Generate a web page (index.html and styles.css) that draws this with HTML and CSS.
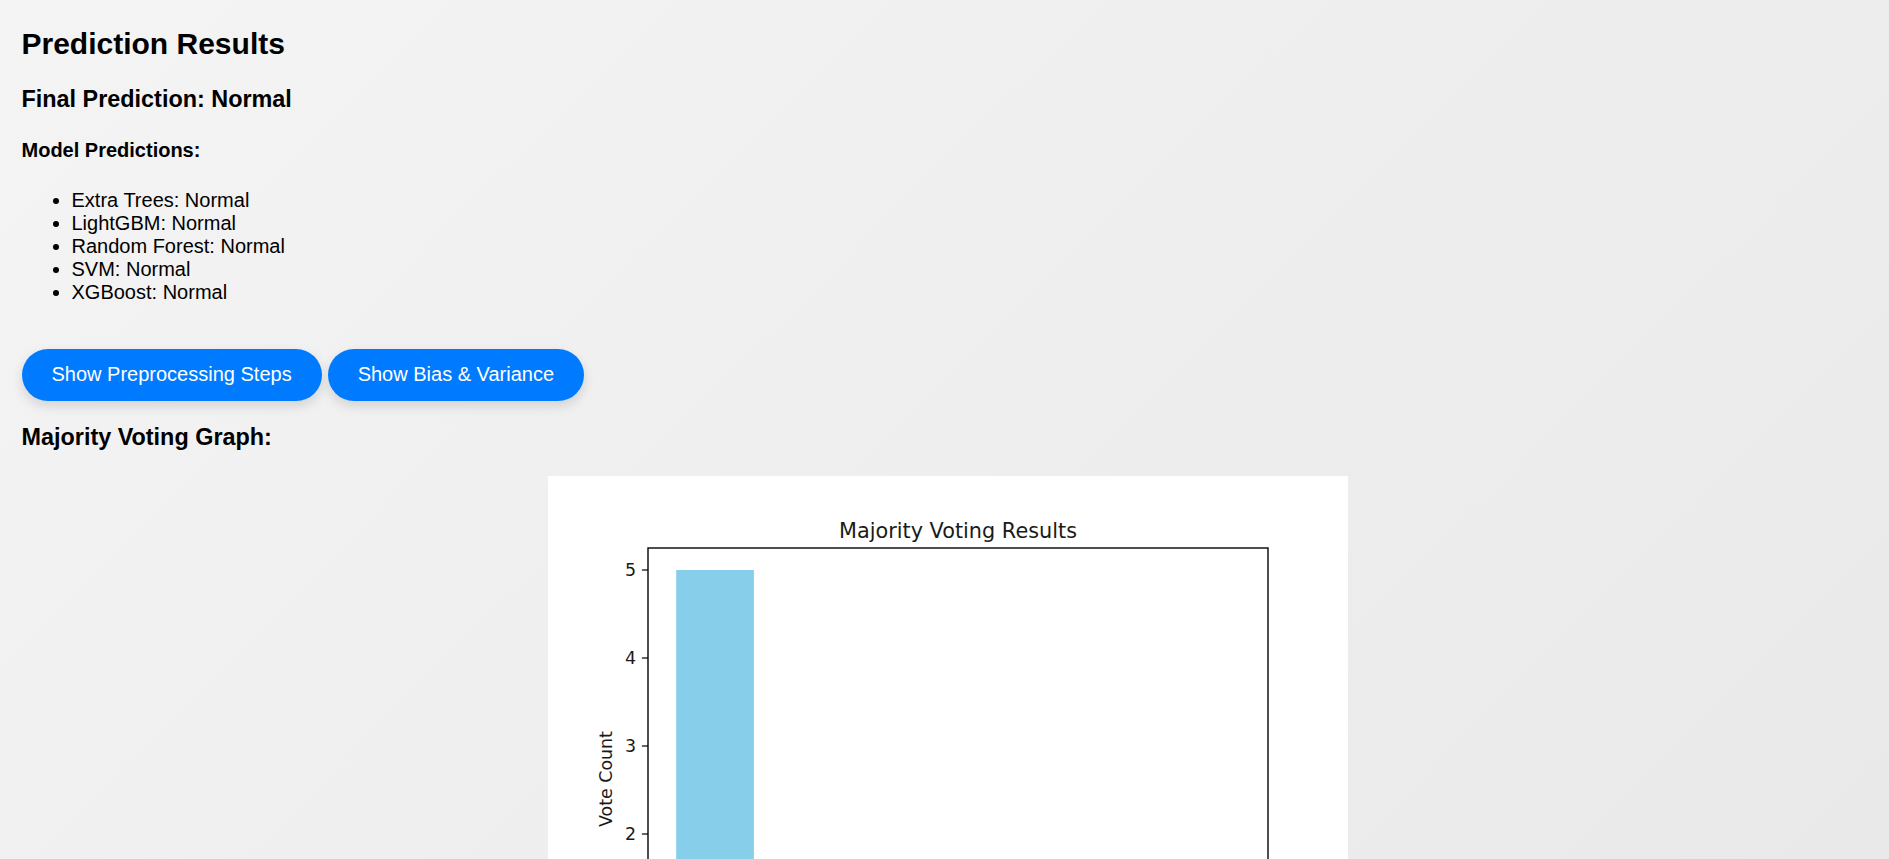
FILE: index.html
```html
<!DOCTYPE html>
<html lang="en">
<head>
<meta charset="utf-8">
<title>Prediction Results</title>
<link rel="stylesheet" href="styles.css">
</head>
<body>
<main class="page">
  <h2 class="title">Prediction Results</h2>
  <h3 class="final">Final Prediction: Normal</h3>
  <h4 class="sub">Model Predictions:</h4>
  <ul class="models">
    <li>Extra Trees: Normal</li>
    <li>LightGBM: Normal</li>
    <li>Random Forest: Normal</li>
    <li>SVM: Normal</li>
    <li>XGBoost: Normal</li>
  </ul>
  <div class="actions">
    <button class="btn" type="button">Show Preprocessing Steps</button>
    <button class="btn" type="button">Show Bias &amp; Variance</button>
  </div>
  <h3 class="graph-title">Majority Voting Graph:</h3>
  <div class="graph">
    <svg class="chart" width="800" height="600" viewBox="0 0 800 600" xmlns="http://www.w3.org/2000/svg">
      <rect x="0" y="0" width="800" height="600" fill="#ffffff"/>
      <rect x="128.2" y="94" width="77.7" height="440" fill="#87ceeb"/>
      <rect x="100" y="72" width="620" height="462" fill="none" stroke="#000" stroke-width="1.39"/>
      <g stroke="#000" stroke-width="1.2">
        <line x1="100" y1="94" x2="93.9" y2="94"/>
        <line x1="100" y1="182" x2="93.9" y2="182"/>
        <line x1="100" y1="270" x2="93.9" y2="270"/>
        <line x1="100" y1="358" x2="93.9" y2="358"/>
        <line x1="100" y1="446" x2="93.9" y2="446"/>
        <line x1="100" y1="534" x2="93.9" y2="534"/>
      </g>
      <g class="tick" text-anchor="end">
        <text x="88" y="100">5</text>
        <text x="88" y="188">4</text>
        <text x="88" y="276">3</text>
        <text x="88" y="364">2</text>
        <text x="88" y="452">1</text>
        <text x="88" y="540">0</text>
      </g>
      <text class="ylabel" x="0" y="0" text-anchor="middle" transform="translate(63.5 303) rotate(-90)">Vote Count</text>
      <text class="ctitle" x="410" y="61.6" text-anchor="middle">Majority Voting Results</text>
    </svg>
  </div>
</main>
</body>
</html>
```

FILE: styles.css
```css
html {
  min-height: 100%;
  background: linear-gradient(135deg, #f4f4f4 0%, #e9e9e9 100%) fixed;
}

body {
  margin: 0;
  font-family: "Liberation Sans", Arial, sans-serif;
  color: #000;
}

.page {
  padding: 0 15px 40px 21.5px;
}

.title {
  font-size: 30px;
  font-weight: bold;
  margin: 27px 0 24.9px;
}

.final {
  font-size: 23.4px;
  font-weight: bold;
  margin: 23.4px 0;
}

.sub {
  font-size: 20px;
  font-weight: bold;
  margin: 26.6px 0;
}

.models {
  font-size: 20px;
  margin: 20px 0;
  padding-left: 50px;
}

.actions {
  display: flex;
  gap: 6px;
  margin-top: 44.5px;
}

.btn {
  font-family: "Liberation Sans", Arial, sans-serif;
  font-size: 20px;
  line-height: 23px;
  padding: 14.7px 30px;
  border: none;
  border-radius: 30px;
  background: #007bff;
  color: #fff;
  box-shadow: 0 5px 12px rgba(0, 0, 0, 0.13);
  cursor: pointer;
}

.graph-title {
  font-size: 23.4px;
  font-weight: bold;
  margin: 23.4px 0;
}

.graph {
  padding-top: 1px;
}

.chart {
  display: block;
  margin: 0 auto;
}

.tick {
  font-family: "DejaVu Sans", sans-serif;
  font-size: 17.4px;
  fill: #1a1a1a;
}

.ylabel {
  font-family: "DejaVu Sans", sans-serif;
  font-size: 17.4px;
  fill: #1a1a1a;
}

.ctitle {
  font-family: "DejaVu Sans", sans-serif;
  font-size: 20.8px;
  fill: #1a1a1a;
}
```
